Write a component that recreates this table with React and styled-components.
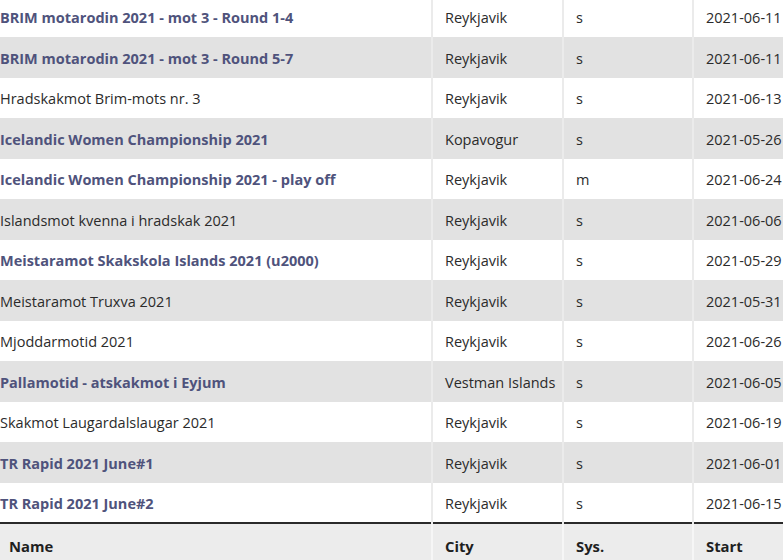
import React from "react";
import styled, { createGlobalStyle } from "styled-components";

const Global = createGlobalStyle`
  html, body { margin: 0; padding: 0; background: #fff; overflow: hidden; }
  body { font-family: "Open Sans", "Noto Sans", Arial, sans-serif; }
`;

const Viewport = styled.div`
  width: 783px;
  height: 560px;
  overflow: hidden;
`;

const Table = styled.table`
  width: 823px;
  margin-top: -3.4px;
  border-collapse: collapse;
  table-layout: fixed;
  font-size: 14.5px;
  line-height: 21px;
  color: #2b2b2b;
`;

const Row = styled.tr`
  background: ${(p) => (p.$alt ? "#e2e2e2" : "#ffffff")};
`;

const Cell = styled.td`
  height: 40.5px;
  padding: 2px 12px 0;
  box-sizing: border-box;
  vertical-align: middle;
  white-space: nowrap;
  overflow: hidden;
  border-left: 2px solid #ebebeb;
  &:first-child {
    padding-left: 0;
    border-left: none;
  }
`;

const NameLink = styled.a`
  color: #4f537c;
  font-weight: 700;
  text-decoration: none;
`;

const Foot = styled.tfoot`
  background: #ececec;
`;

const HeadCell = styled.th`
  height: 40px;
  padding: 2px 12px 0;
  text-align: left;
  font-weight: 700;
  font-size: 14.8px;
  color: #1f1f1f;
  border-top: 2px solid #2a2a2a;
  border-left: 2px solid #f6f6f6;
  &:first-child {
    padding-left: 9px;
    border-left: none;
  }
`;

const rows = [
  ["BRIM motarodin 2021 - mot 3 - Round 1-4", true, "Reykjavik", "s", "2021-06-11"],
  ["BRIM motarodin 2021 - mot 3 - Round 5-7", true, "Reykjavik", "s", "2021-06-11"],
  ["Hradskakmot Brim-mots nr. 3", false, "Reykjavik", "s", "2021-06-13"],
  ["Icelandic Women Championship 2021", true, "Kopavogur", "s", "2021-05-26"],
  ["Icelandic Women Championship 2021 - play off", true, "Reykjavik", "m", "2021-06-24"],
  ["Islandsmot kvenna i hradskak 2021", false, "Reykjavik", "s", "2021-06-06"],
  ["Meistaramot Skakskola Islands 2021 (u2000)", true, "Reykjavik", "s", "2021-05-29"],
  ["Meistaramot Truxva 2021", false, "Reykjavik", "s", "2021-05-31"],
  ["Mjoddarmotid 2021", false, "Reykjavik", "s", "2021-06-26"],
  ["Pallamotid - atskakmot i Eyjum", true, "Vestman Islands", "s", "2021-06-05"],
  ["Skakmot Laugardalslaugar 2021", false, "Reykjavik", "s", "2021-06-19"],
  ["TR Rapid 2021 June#1", true, "Reykjavik", "s", "2021-06-01"],
  ["TR Rapid 2021 June#2", true, "Reykjavik", "s", "2021-06-15"],
];

export default function App() {
  return (
    <Viewport>
      <Global />
      <Table>
        <colgroup>
          <col style={{ width: 432 }} />
          <col style={{ width: 131 }} />
          <col style={{ width: 130 }} />
          <col style={{ width: 130 }} />
        </colgroup>
        <tbody>
          {rows.map(([name, link, city, sys, start], i) => (
            <Row key={i} $alt={i % 2 === 1}>
              <Cell>{link ? <NameLink href="#">{name}</NameLink> : name}</Cell>
              <Cell>{city}</Cell>
              <Cell>{sys}</Cell>
              <Cell>{start}</Cell>
            </Row>
          ))}
        </tbody>
        <Foot>
          <tr>
            <HeadCell>Name</HeadCell>
            <HeadCell>City</HeadCell>
            <HeadCell>Sys.</HeadCell>
            <HeadCell>Start</HeadCell>
          </tr>
        </Foot>
      </Table>
    </Viewport>
  );
}
